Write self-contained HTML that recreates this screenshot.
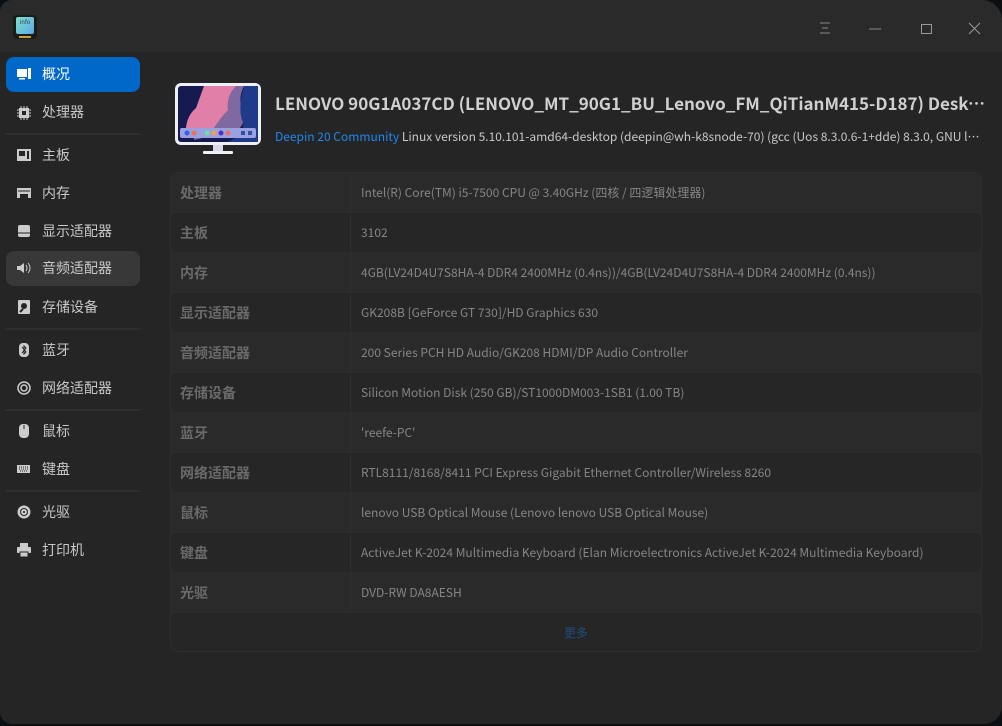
<!DOCTYPE html>
<html><head><meta charset="utf-8"><style>
*{margin:0;padding:0;box-sizing:border-box}
body{width:1002px;height:726px;background:#0b0f12;font-family:"Noto Sans CJK SC","Liberation Sans",sans-serif;overflow:hidden;position:relative}
.win{position:absolute;left:0;top:0;width:1002px;height:724px;background:#252525;border-radius:12px 20px 18px 12px;overflow:hidden}
.tb{position:absolute;left:0;top:0;width:100%;height:52px;background:#2a2a2a}
.side{position:absolute;left:0;top:52px;width:146px}
.it{position:absolute;left:6px;width:134px;height:35px;border-radius:8px;color:#c8c8c8;font-size:14px;line-height:35px;padding-left:36px}
.it svg{position:absolute;left:10px;top:10px}
.sel{background:#0068c8;color:#fff}
.hov{background:#383838}
.sep{position:absolute;left:5px;width:136px;height:2px;background:#2e2e2e}
.title{position:absolute;left:275px;top:90px;font-size:17px;font-weight:bold;color:#d0d0d0;white-space:nowrap;width:710px;overflow:hidden;text-overflow:ellipsis}
.sub{position:absolute;left:275px;top:128px;font-size:12px;color:#c8c8c8;white-space:nowrap;width:708px;overflow:hidden;text-overflow:ellipsis}
.sub b{font-weight:normal;color:#1e88f0}
.tbl{position:absolute;left:170px;top:172px;width:812px;height:480px;border:1px solid #2e2e2e;border-radius:8px;overflow:hidden;background:#262626}
.r{height:40px;position:relative;border-bottom:1px solid #2c2c2c}
.r:nth-child(odd){background:#2a2a2a}
.r:nth-child(even){background:#262626}
.l{position:absolute;left:9px;top:0;line-height:40px;font-size:14px;font-weight:bold;color:#6a6a6a}
.v{position:absolute;left:179px;top:0;line-height:40px;font-size:12px;color:#858585;border-left:1px solid #2e2e2e;padding-left:10px;height:40px;white-space:nowrap}
.more{position:absolute;left:0;top:440px;width:100%;text-align:center;line-height:40px;font-size:12px;color:#1d4f80}
</style></head><body>
<div class="win">
<div class="tb">
 <div style="position:absolute;left:13px;top:15px;width:24px;height:24px;background:#1a1a1a;border-radius:4px"></div>
 <div style="position:absolute;left:16px;top:17px;width:18px;height:17px;background:linear-gradient(135deg,#7fe0c8,#5aa8e8);border-radius:2px;font-size:6px;color:#345;text-align:center;line-height:9px">info</div>
 <div style="position:absolute;left:19px;top:36px;width:12px;height:2px;background:#c9a030"></div>
 <svg style="position:absolute;left:818px;top:22px" width="14" height="12"><path d="M2 1h10M4 6h6M2 11h10" stroke="#888" stroke-width="1"/></svg>
 <svg style="position:absolute;left:868px;top:22px" width="14" height="12"><path d="M1 7h12" stroke="#888"/></svg>
 <svg style="position:absolute;left:920px;top:22px" width="14" height="14"><rect x="1.5" y="2.5" width="10" height="9" fill="none" stroke="#999"/></svg>
 <svg style="position:absolute;left:968px;top:22px" width="14" height="14"><path d="M1 1l11 11M12 1L1 12" stroke="#999"/></svg>
</div>
<div class="side">
 <div class="it sel" style="top:5px"><svg width="16" height="14"><rect x="1" y="2" width="10" height="8" fill="#fff"/><rect x="12" y="1" width="3" height="11" fill="#fff"/><rect x="3" y="11" width="6" height="1.5" fill="#fff"/></svg>概况</div>
 <div class="it" style="top:43px"><svg width="16" height="16"><rect x="3" y="3" width="10" height="10" fill="#ccc"/><rect x="6" y="6" width="4" height="4" fill="#252525"/><path d="M1 5h2M1 8h2M1 11h2M13 5h2M13 8h2M13 11h2M5 1v2M8 1v2M11 1v2M5 13v2M8 13v2M11 13v2" stroke="#ccc"/></svg>处理器</div>
 <div class="sep" style="top:81px"></div>
 <div class="it" style="top:86px"><svg width="16" height="14"><rect x="1" y="1" width="14" height="12" fill="#ccc"/><rect x="3" y="3" width="6" height="5" fill="#252525"/><rect x="11" y="3" width="2" height="8" fill="#252525"/></svg>主板</div>
 <div class="it" style="top:124px"><svg width="16" height="14"><path d="M1 2h14v10h-3v-4h-8v4h-3z" fill="#ccc"/><path d="M3 4v2M5 4v2M7 4v2M9 4v2M11 4v2M13 4v2" stroke="#252525"/></svg>内存</div>
 <div class="it" style="top:162px"><svg width="16" height="14"><rect x="2" y="1" width="12" height="12" rx="2" fill="#ccc"/><path d="M2 9h12" stroke="#252525"/></svg>显示适配器</div>
 <div class="it hov" style="top:199px"><svg width="16" height="14"><path d="M1 5h3l4-3v10l-4-3h-3z" fill="#ccc"/><path d="M10 4q2 3 0 6M12 2q4 5 0 10" stroke="#ccc" fill="none"/></svg>音频适配器</div>
 <div class="it" style="top:238px"><svg width="16" height="14"><rect x="2" y="0" width="12" height="14" rx="1" fill="#ccc"/><circle cx="8" cy="6" r="3" fill="#252525"/><path d="M4 12l3-3" stroke="#252525" stroke-width="2"/></svg>存储设备</div>
 <div class="sep" style="top:276px"></div>
 <div class="it" style="top:281px"><svg width="16" height="14"><rect x="3" y="0" width="10" height="14" rx="4" fill="#ccc"/><path d="M6 4l4 5-2 2V3l2 2-4 5" stroke="#252525" fill="none"/></svg>蓝牙</div>
 <div class="it" style="top:319px"><svg width="16" height="14"><circle cx="8" cy="7" r="6" stroke="#ccc" fill="none" stroke-width="1.5"/><circle cx="8" cy="7" r="3" stroke="#ccc" fill="none" stroke-width="1.5"/></svg>网络适配器</div>
 <div class="sep" style="top:357px"></div>
 <div class="it" style="top:362px"><svg width="16" height="14"><rect x="3" y="0" width="10" height="14" rx="4" fill="#ccc"/><path d="M8 1v4" stroke="#252525"/></svg>鼠标</div>
 <div class="it" style="top:400px"><svg width="16" height="14"><rect x="1" y="3" width="13" height="8" fill="#ccc"/><path d="M3 5h9M3 7h9M4 9h7" stroke="#252525" stroke-dasharray="1 1"/></svg>键盘</div>
 <div class="sep" style="top:438px"></div>
 <div class="it" style="top:443px"><svg width="16" height="14"><circle cx="8" cy="7" r="6.5" fill="#ccc"/><circle cx="8" cy="7" r="3.5" fill="none" stroke="#252525"/><circle cx="8" cy="7" r="1" fill="#252525"/></svg>光驱</div>
 <div class="it" style="top:481px"><svg width="16" height="14"><rect x="4" y="0" width="8" height="4" fill="#ccc"/><rect x="1" y="4" width="14" height="6" rx="1" fill="#ccc"/><rect x="4" y="9" width="8" height="5" fill="#ccc" stroke="#252525"/></svg>打印机</div>
</div>
<svg style="position:absolute;left:174px;top:82px" width="90" height="75">
 <rect x="1" y="1" width="86" height="62" rx="6" fill="#eef0f8"/>
 <rect x="4" y="4" width="80" height="56" rx="3" fill="#151a50"/>
 <path d="M30 4h40q-6 12-2 22q6 12-4 22l-44 10q-2-20 6-34z" fill="#8068a0"/>
 <path d="M30 4h32q-10 10-8 24q-10 10-20 28l-22 0q-2-20 10-30z" fill="#e080a8"/>
 <path d="M70 4h14v56h-30q20-10 14-22q-4-12 2-34z" fill="#1e3a88"/>
 <rect x="6" y="46" width="76" height="10" rx="2" fill="#9aa0e0"/>
 <circle cx="13" cy="51" r="2.5" fill="#3060f0"/><circle cx="20" cy="51" r="2.5" fill="#f07050"/>
 <circle cx="33" cy="51" r="2.5" fill="#70e0a0"/><circle cx="40" cy="51" r="2.5" fill="#f0a040"/>
 <circle cx="47" cy="51" r="2.5" fill="#5030c0"/><circle cx="54" cy="51" r="2.5" fill="#f07060"/>
 <rect x="67" y="49" width="4" height="4" fill="#3050a0"/><rect x="74" y="49" width="4" height="4" fill="#3050a0"/>
 <rect x="39" y="63" width="10" height="6" fill="#d8dae8"/><rect x="29" y="69" width="30" height="3" rx="1" fill="#eef0f8"/>
</svg>
<div class="title">LENOVO 90G1A037CD (LENOVO_MT_90G1_BU_Lenovo_FM_QiTianM415-D187) Desktop Computer</div>
<div class="sub"><b>Deepin 20 Community</b> Linux version 5.10.101-amd64-desktop (deepin@wh-k8snode-70) (gcc (Uos 8.3.0.6-1+dde) 8.3.0, GNU ld (GNU Binutils)</div>
<div class="tbl">
 <div class="r"><div class="l">处理器</div><div class="v">Intel(R) Core(TM) i5-7500 CPU @ 3.40GHz (四核 / 四逻辑处理器)</div></div>
 <div class="r"><div class="l">主板</div><div class="v">3102</div></div>
 <div class="r"><div class="l">内存</div><div class="v">4GB(LV24D4U7S8HA-4 DDR4 2400MHz (0.4ns))/4GB(LV24D4U7S8HA-4 DDR4 2400MHz (0.4ns))</div></div>
 <div class="r"><div class="l">显示适配器</div><div class="v">GK208B [GeForce GT 730]/HD Graphics 630</div></div>
 <div class="r"><div class="l">音频适配器</div><div class="v">200 Series PCH HD Audio/GK208 HDMI/DP Audio Controller</div></div>
 <div class="r"><div class="l">存储设备</div><div class="v">Silicon Motion Disk (250 GB)/ST1000DM003-1SB1 (1.00 TB)</div></div>
 <div class="r"><div class="l">蓝牙</div><div class="v">'reefe-PC'</div></div>
 <div class="r"><div class="l">网络适配器</div><div class="v">RTL8111/8168/8411 PCI Express Gigabit Ethernet Controller/Wireless 8260</div></div>
 <div class="r"><div class="l">鼠标</div><div class="v">lenovo USB Optical Mouse (Lenovo lenovo USB Optical Mouse)</div></div>
 <div class="r"><div class="l">键盘</div><div class="v">ActiveJet K-2024 Multimedia Keyboard (Elan Microelectronics ActiveJet K-2024 Multimedia Keyboard)</div></div>
 <div class="r"><div class="l">光驱</div><div class="v">DVD-RW DA8AESH</div></div>
 <div class="more">更多</div>
</div>
</div>
</body></html>
